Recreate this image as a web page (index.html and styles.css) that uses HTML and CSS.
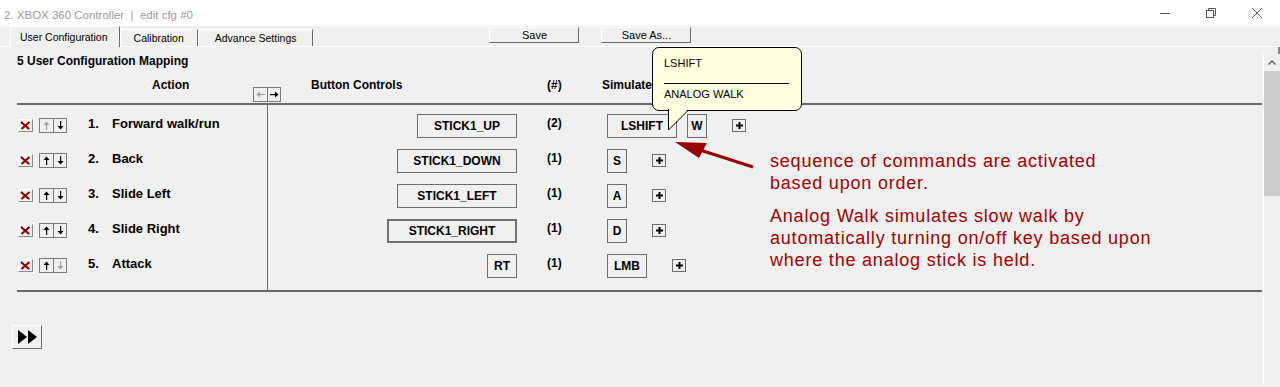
FILE: index.html
```html
<!DOCTYPE html>
<html lang="en">
<head>
    <meta charset="UTF-8">
    <title>2. XBOX 360 Controller | edit cfg #0</title>
    <link rel="stylesheet" href="styles.css">
</head>
<body>
    <div class="titlebar">
        <span class="title">2. XBOX 360 Controller &nbsp;|&nbsp; edit cfg #0</span>
        <div class="caption">
            <span class="cap"><svg width="10" height="10"><line x1="0" y1="5.5" x2="10" y2="5.5"/></svg></span>
            <span class="cap"><svg width="10" height="10"><rect x="0.5" y="2.5" width="7" height="7"/><polyline points="2.5,2.5 2.5,0.5 9.5,0.5 9.5,7.5 7.5,7.5"/></svg></span>
            <span class="cap"><svg width="10" height="10"><line x1="0" y1="0" x2="10" y2="10"/><line x1="10" y1="0" x2="0" y2="10"/></svg></span>
        </div>
    </div>

    <div class="tabrow">
        <div class="tab active">User Configuration</div>
        <div class="tab">Calibration</div>
        <div class="tab tab-adv">Advance Settings</div>
        <button class="btn btn-save">Save</button>
        <button class="btn btn-saveas">Save As...</button>
    </div>

    <div class="pane">
        <div class="content">
            <div class="heading">5 User Configuration Mapping</div>

            <div class="header">
                <span class="h-action">Action</span>
                <span class="arrowbox h-arrows">
                    <span class="cell off"><svg width="9" height="7" viewBox="0 0 9 7"><path d="M0.5 3.5 L4 0.5 V6.5 Z"/><rect x="3.5" y="3" width="5.5" height="1"/></svg></span>
                    <span class="cell"><svg width="9" height="7" viewBox="0 0 9 7"><path d="M8.5 3.5 L5 0.5 V6.5 Z"/><rect x="0" y="3" width="5.5" height="1.2"/></svg></span>
                </span>
                <span class="h-buttons">Button Controls</span>
                <span class="h-count">(#)</span>
                <span class="h-sim">Simulate</span>
            </div>

            <div class="mapping">
                <div class="col-action">
                    <div class="row">
                        <span class="xbtn"><svg width="11" height="9"><line class="xs" x1="1.5" y1="1" x2="9.5" y2="8"/><line x1="1" y1="1" x2="9" y2="8"/><line x1="9.5" y1="1" x2="1.5" y2="8"/></svg></span>
                        <span class="arrowbox">
                            <span class="cell off"><svg width="7" height="9" viewBox="0 0 7 9"><path d="M3.5 0.5 L0.5 4 H6.5 Z"/><rect x="3" y="3.5" width="1.2" height="5.5"/></svg></span>
                            <span class="cell"><svg width="7" height="9" viewBox="0 0 7 9"><path d="M3.5 8.5 L0.5 5 H6.5 Z"/><rect x="3" y="0" width="1.2" height="5.5"/></svg></span>
                        </span>
                        <span class="num">1.</span><span class="label">Forward walk/run</span>
                    </div>
                    <div class="row">
                        <span class="xbtn"><svg width="11" height="9"><line class="xs" x1="1.5" y1="1" x2="9.5" y2="8"/><line x1="1" y1="1" x2="9" y2="8"/><line x1="9.5" y1="1" x2="1.5" y2="8"/></svg></span>
                        <span class="arrowbox">
                            <span class="cell"><svg width="7" height="9" viewBox="0 0 7 9"><path d="M3.5 0.5 L0.5 4 H6.5 Z"/><rect x="3" y="3.5" width="1.2" height="5.5"/></svg></span>
                            <span class="cell"><svg width="7" height="9" viewBox="0 0 7 9"><path d="M3.5 8.5 L0.5 5 H6.5 Z"/><rect x="3" y="0" width="1.2" height="5.5"/></svg></span>
                        </span>
                        <span class="num">2.</span><span class="label">Back</span>
                    </div>
                    <div class="row">
                        <span class="xbtn"><svg width="11" height="9"><line class="xs" x1="1.5" y1="1" x2="9.5" y2="8"/><line x1="1" y1="1" x2="9" y2="8"/><line x1="9.5" y1="1" x2="1.5" y2="8"/></svg></span>
                        <span class="arrowbox">
                            <span class="cell"><svg width="7" height="9" viewBox="0 0 7 9"><path d="M3.5 0.5 L0.5 4 H6.5 Z"/><rect x="3" y="3.5" width="1.2" height="5.5"/></svg></span>
                            <span class="cell"><svg width="7" height="9" viewBox="0 0 7 9"><path d="M3.5 8.5 L0.5 5 H6.5 Z"/><rect x="3" y="0" width="1.2" height="5.5"/></svg></span>
                        </span>
                        <span class="num">3.</span><span class="label">Slide Left</span>
                    </div>
                    <div class="row">
                        <span class="xbtn"><svg width="11" height="9"><line class="xs" x1="1.5" y1="1" x2="9.5" y2="8"/><line x1="1" y1="1" x2="9" y2="8"/><line x1="9.5" y1="1" x2="1.5" y2="8"/></svg></span>
                        <span class="arrowbox">
                            <span class="cell"><svg width="7" height="9" viewBox="0 0 7 9"><path d="M3.5 0.5 L0.5 4 H6.5 Z"/><rect x="3" y="3.5" width="1.2" height="5.5"/></svg></span>
                            <span class="cell"><svg width="7" height="9" viewBox="0 0 7 9"><path d="M3.5 8.5 L0.5 5 H6.5 Z"/><rect x="3" y="0" width="1.2" height="5.5"/></svg></span>
                        </span>
                        <span class="num">4.</span><span class="label">Slide Right</span>
                    </div>
                    <div class="row">
                        <span class="xbtn"><svg width="11" height="9"><line class="xs" x1="1.5" y1="1" x2="9.5" y2="8"/><line x1="1" y1="1" x2="9" y2="8"/><line x1="9.5" y1="1" x2="1.5" y2="8"/></svg></span>
                        <span class="arrowbox">
                            <span class="cell"><svg width="7" height="9" viewBox="0 0 7 9"><path d="M3.5 0.5 L0.5 4 H6.5 Z"/><rect x="3" y="3.5" width="1.2" height="5.5"/></svg></span>
                            <span class="cell off"><svg width="7" height="9" viewBox="0 0 7 9"><path d="M3.5 8.5 L0.5 5 H6.5 Z"/><rect x="3" y="0" width="1.2" height="5.5"/></svg></span>
                        </span>
                        <span class="num">5.</span><span class="label">Attack</span>
                    </div>
                </div>

                <div class="col-controls">
                    <div class="row">
                        <span class="bc"><span class="ctl b100">STICK1_UP</span></span>
                        <span class="count">(2)</span>
                        <span class="sim">
                            <span class="key k70">LSHIFT</span>
                            <span class="key k20">W</span>
                            <span class="plus"><svg width="7" height="7"><rect x="2.5" y="0" width="2" height="7"/><rect x="0" y="2.5" width="7" height="2"/></svg></span>
                        </span>
                    </div>
                    <div class="row">
                        <span class="bc"><span class="ctl b120">STICK1_DOWN</span></span>
                        <span class="count">(1)</span>
                        <span class="sim">
                            <span class="key k20">S</span>
                            <span class="plus"><svg width="7" height="7"><rect x="2.5" y="0" width="2" height="7"/><rect x="0" y="2.5" width="7" height="2"/></svg></span>
                        </span>
                    </div>
                    <div class="row">
                        <span class="bc"><span class="ctl b120">STICK1_LEFT</span></span>
                        <span class="count">(1)</span>
                        <span class="sim">
                            <span class="key k20">A</span>
                            <span class="plus"><svg width="7" height="7"><rect x="2.5" y="0" width="2" height="7"/><rect x="0" y="2.5" width="7" height="2"/></svg></span>
                        </span>
                    </div>
                    <div class="row">
                        <span class="bc"><span class="ctl sel b130">STICK1_RIGHT</span></span>
                        <span class="count">(1)</span>
                        <span class="sim">
                            <span class="key k20">D</span>
                            <span class="plus"><svg width="7" height="7"><rect x="2.5" y="0" width="2" height="7"/><rect x="0" y="2.5" width="7" height="2"/></svg></span>
                        </span>
                    </div>
                    <div class="row">
                        <span class="bc"><span class="ctl b30">RT</span></span>
                        <span class="count">(1)</span>
                        <span class="sim">
                            <span class="key k40">LMB</span>
                            <span class="plus"><svg width="7" height="7"><rect x="2.5" y="0" width="2" height="7"/><rect x="0" y="2.5" width="7" height="2"/></svg></span>
                        </span>
                    </div>
                </div>
            </div>

            <div class="ff"><svg width="19" height="14"><polygon points="0,0 9,7 0,14"/><polygon points="10,0 19,7 10,14"/></svg></div>
        </div>

        <div class="scroll">
            <div class="sb-notch"><span></span></div>
            <div class="sb">
                <div class="sb-up"><svg width="8" height="5"><polyline points="0.5,4.5 4,1 7.5,4.5"/></svg></div>
                <div class="sb-thumb"></div>
            </div>
        </div>
    </div>

    <!-- tooltip over the LSHIFT key -->
    <div class="tip">
        <div>LSHIFT</div>
        <div class="tip-sep"></div>
        <div>ANALOG WALK</div>
    </div>
    <svg class="tip-tail" width="23" height="23"><polygon points="1.5,0 21,0 1.5,21"/><polyline points="1.5,0 1.5,21 21,1.5"/></svg>

    <!-- annotation -->
    <svg class="note-arrow" width="90" height="35"><line x1="30" y1="12" x2="83" y2="29"/><polygon points="5,4 37,5 29,20"/></svg>
    <div class="note">
        <p>sequence of commands are activated<br>based upon order.</p>
        <p>Analog Walk simulates slow walk by<br>automatically turning on/off key based upon<br>where the analog stick is held.</p>
    </div>
</body>
</html>
```

FILE: styles.css
```css
* {
    box-sizing: border-box;
}
body {
    margin: 0;
    width: 1280px;
    height: 387px;
    overflow: hidden;
    position: relative;
    background-color: #f0f0f0;
    color: #000;
    font-family: "Liberation Sans", Arial, sans-serif;
    font-size: 11px;
}

/* window title */
.titlebar {
    display: flex;
    height: 26px;
    background-color: #fff;
}
.title {
    flex: 1;
    padding: 8px 0 0 4px;
    font-size: 11.5px;
    line-height: 14px;
    color: #999;
}
.caption {
    display: flex;
}
.cap {
    width: 46px;
    display: flex;
    align-items: center;
    justify-content: center;
}
.cap svg {
    fill: none;
    stroke: #555;
    stroke-width: 1;
}

/* tabs + save buttons */
.tabrow {
    display: flex;
    align-items: flex-end;
    height: 20px;
    padding-left: 10px;
}
.tab {
    height: 17px;
    padding: 0 13px;
    font-size: 10.5px;
    line-height: 16px;
    border-top: 1px solid #fff;
    border-left: 1px solid #fff;
    border-right: 1px solid #696969;
}
.tab-adv {
    padding: 0 16px;
}
.tab.active {
    position: relative;
    height: 21px;
    margin-bottom: -1px;
    padding: 2px 11px 0 9px;
    background-color: #f0f0f0;
}
.btn {
    align-self: flex-start;
    margin-top: 1px;
    width: 90px;
    height: 16px;
    padding: 0;
    font-family: "Liberation Sans", Arial, sans-serif;
    font-size: 11px;
    line-height: 14px;
    color: #000;
    background-color: #f0f0f0;
    border: 1px solid;
    border-color: #fff #696969 #696969 #fff;
}
.btn-save {
    margin-left: 176px;
}
.btn-saveas {
    margin-left: 22px;
}

/* tab page */
.pane {
    display: flex;
    height: 341px;
    border-top: 1px solid #fff;
}
.content {
    flex: 1;
    padding: 7px 1px 0 17px;
}
.heading {
    font-weight: bold;
    font-size: 12px;
    line-height: 14px;
}
.header {
    display: flex;
    height: 35px;
    font-weight: bold;
    font-size: 12px;
    line-height: 15px;
}
.h-action {
    width: 236px;
    padding: 10px 0 0 135px;
}
.h-arrows {
    align-self: flex-end;
    margin-bottom: 1px;
}
.h-buttons {
    width: 266px;
    padding: 10px 0 0 30px;
}
.h-count {
    width: 55px;
    padding-top: 10px;
}
.h-sim {
    padding-top: 10px;
}

.arrowbox {
    display: flex;
    height: 15px;
    border: 1px solid #7a7a7a;
}
.arrowbox .cell {
    width: 13px;
    display: flex;
    align-items: center;
    justify-content: center;
    fill: #000;
}
.arrowbox .cell + .cell {
    border-left: 1px solid #7a7a7a;
}
.arrowbox .cell.off {
    fill: #a0a0a0;
}

.mapping {
    display: flex;
    border-top: 2px solid #696969;
    border-bottom: 2px solid #696969;
}
.col-action {
    width: 250px;
    padding: 3px 0 7px;
}
.col-controls {
    flex: 1;
    padding: 3px 0 7px;
    border-left: 1px solid #696969;
}
.row {
    display: flex;
    align-items: center;
    height: 35px;
}
.xbtn {
    margin-left: 1px;
    width: 15px;
    height: 13px;
    display: flex;
    align-items: center;
    justify-content: center;
    border: 1px solid;
    border-color: #fff #8a8a8a #8a8a8a #fff;
}
.xbtn svg {
    stroke: #8b0000;
    stroke-width: 2;
}
.xbtn .xs {
    stroke: #200;
    stroke-width: 1;
}
.col-action .arrowbox {
    margin-left: 6px;
}
.num,
.label {
    align-self: flex-start;
    margin-top: 8px;
    font-weight: bold;
    font-size: 13px;
    line-height: 15px;
}
.num {
    width: 24px;
    margin-left: 21px;
}

.bc {
    width: 249px;
    display: flex;
    justify-content: flex-end;
}
.ctl,
.key {
    height: 24px;
    border: 1px solid #6d6d6d;
    font-weight: bold;
    font-size: 12px;
    line-height: 22px;
    text-align: center;
}
.ctl.sel {
    border: 2px solid #707070;
    line-height: 20px;
}
.b30 { width: 30px; }
.b100 { width: 100px; }
.b120 { width: 120px; }
.b130 { width: 130px; }
.k20 { width: 20px; }
.k40 { width: 40px; }
.k70 { width: 70px; }
.count {
    align-self: flex-start;
    margin-top: 8px;
    width: 90px;
    padding-left: 30px;
    font-weight: bold;
    font-size: 12px;
    line-height: 15px;
}
.sim {
    display: flex;
    align-items: center;
    gap: 10px;
}
.plus {
    margin-left: 15px;
    width: 14px;
    height: 13px;
    display: flex;
    align-items: center;
    justify-content: center;
    border: 1px solid #6d6d6d;
    fill: #000;
}

.ff {
    margin: 33px 0 0 -5px;
    width: 30px;
    height: 24px;
    display: flex;
    align-items: center;
    padding-left: 5px;
    border: 1px solid;
    border-color: #fff #696969 #696969 #fff;
    fill: #000;
}

/* scrollbar */
.scroll {
    width: 17px;
    display: flex;
    flex-direction: column;
}
.sb-notch {
    height: 7px;
    display: flex;
    justify-content: flex-end;
}
.sb-notch span {
    width: 2px;
    background-color: #888;
}
.sb {
    height: 329px;
    border-left: 1px solid #fff;
}
.sb-up {
    height: 17px;
    display: flex;
    align-items: center;
    justify-content: center;
}
.sb-up svg {
    fill: none;
    stroke: #606060;
    stroke-width: 1.5;
}
.sb-thumb {
    height: 125px;
    background-color: #cdcdcd;
}

/* tooltip */
.tip {
    position: absolute;
    left: 652px;
    top: 47px;
    width: 150px;
    height: 64px;
    padding: 8px 0 0 11px;
    border: 1px solid #000;
    border-radius: 7px;
    background-color: #ffffe1;
    font-size: 11px;
    line-height: 14px;
}
.tip-sep {
    width: 125px;
    height: 1px;
    margin: 13px 0 3px;
    background-color: #000;
}
.tip-tail {
    position: absolute;
    left: 667px;
    top: 109px;
}
.tip-tail polygon {
    fill: #ffffe1;
}
.tip-tail polyline {
    fill: none;
    stroke: #000;
    stroke-width: 1;
}

/* red annotation */
.note-arrow {
    position: absolute;
    left: 670px;
    top: 138px;
}
.note-arrow line {
    stroke: #990000;
    stroke-width: 3;
}
.note-arrow polygon {
    fill: #990000;
}
.note {
    position: absolute;
    left: 770px;
    top: 150px;
    color: #a00000;
    font-size: 18px;
    line-height: 22px;
    letter-spacing: 0.8px;
}
.note p {
    margin: 0;
}
.note p + p {
    margin-top: 11px;
}
```
